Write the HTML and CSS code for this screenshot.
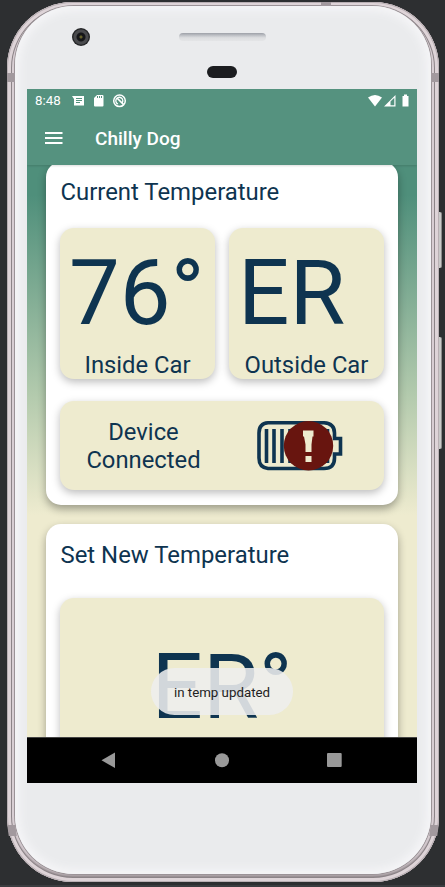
FILE: index.html
```html
<!DOCTYPE html>
<html lang="en">
<head>
<meta charset="utf-8">
<title>Chilly Dog</title>
<link rel="stylesheet" href="styles.css">
</head>
<body>
<div class="phone">
  <i class="side-button power"></i><i class="side-button volume"></i>
  <i class="antenna top-right"></i>
  <i class="antenna left-up"></i><i class="antenna right-up"></i>
  <i class="antenna left-low"></i><i class="antenna right-low"></i>
  <div class="face">
    <div class="bezel">
      <i class="camera"></i><i class="speaker"></i><i class="sensor"></i>
    </div>
    <div class="screen">
      <header class="app-bar">
        <div class="status">
          <span class="clock">8:48</span>
          <svg class="notices" width="56" height="16" viewBox="0 0 56 16">
            <path fill="#fff" d="M0 3H12V12.500H2V6z"/>
            <path stroke="#55927f" d="M4 5.500h6M4 7.500h6M4 9.500h4"/>
            <path fill="#fff" d="M25 2h5.500q1 0 1 1v9.500q0 1-1 1H23q-1 0-1-1V5z"/>
            <path stroke="#55927f" d="M25.500 3v2M27.500 3v2M29.500 3v2"/>
            <g fill="none" stroke="#fff"><circle cx="47.500" cy="7.800" r="5.800" stroke-width="1.500"/><path d="M46 11a3.500 3.500 0 1 1 4-1" stroke-width="1.300"/><path d="M45 5l6.500 6.500" stroke-width="1.700"/></g>
          </svg>
          <svg class="signals" width="44" height="16" viewBox="0 0 44 16">
            <path fill="#fff" d="M0 4.500Q7 -.5 14 4.500L7 13.500ZM27.500 2V13.500H16ZM34.500 3h1.500V1.500h3V3h1.500v10.500h-6z"/>
            <path fill="#55927f" d="M22.500 8.500L26.300 4.800V12.300H22.500Z"/>
          </svg>
        </div>
        <div class="toolbar">
          <svg width="18" height="12" viewBox="0 0 18 12"><path d="M0 1h17.500M0 6h17.500M0 11h17.500" stroke="#fff" stroke-width="2"/></svg>
          <h1>Chilly Dog</h1>
        </div>
      </header>
      <main class="content">
        <section class="card current">
          <h2>Current Temperature</h2>
          <div class="tiles">
            <div class="tile reading"><span class="value">76°</span><span class="label">Inside Car</span></div>
            <div class="tile reading"><span class="value">ER</span><span class="label">Outside Car</span></div>
          </div>
          <div class="tile device">
            <p>Device<br>Connected</p>
            <svg width="88" height="54" viewBox="0 0 88 54">
              <g fill="none" stroke="#0e3450" stroke-width="3.600">
                <path d="M12 4.800H68Q78.500 5.500 78.500 15V20.500H84.500V36H78.500V40Q78.500 50.500 68 50.500H12Q3 49.500 3 40V15Q3 5.500 12 4.800Z"/>
                <path d="M10.500 11v34M18 11v34M26 11v34M34 11v34M71.500 11v34"/>
              </g>
              <circle cx="52.500" cy="27.700" r="24.700" fill="#68150f"/>
              <path fill="#eeebcf" d="M47 12.500h10.500v6h-1l-1 8v7.500h-6v-7.500l-1.500-8h-1zM49.500 38h6v6h-6z"/>
            </svg>
          </div>
        </section>
        <section class="card target">
          <h2>Set New Temperature</h2>
          <div class="tile setpoint"><span class="value">ER°</span></div>
        </section>
        <div class="toast">in temp updated</div>
      </main>
      <nav class="nav">
        <svg width="390" height="46" viewBox="0 0 390 46"><g fill="#999"><path d="M74.500 22.300L88 14.500V30.100Z"/><circle cx="195" cy="22.300" r="7"/><rect x="300" y="15" width="14.700" height="14" rx="1"/></g></svg>
      </nav>
    </div>
  </div>
</div>
</body>
</html>
```
FILE: styles.css
```css
* { box-sizing: border-box; }
body {
  margin: 0;
  height: 887px;
  overflow: hidden;
  background: #2d2f31;
  border-bottom: 2px solid #3b3d40;
  padding: 2px 6px 0 7px;
  font-family: Roboto, sans-serif;
  color: #0e3450;
}
h1, h2, p { margin: 0; font-weight: 400; }
.phone {
  position: relative;
  height: 880px;
  padding: 4px 8px 8px;
  border-radius: 66px;
  background: #d8ced3;
  box-shadow: inset 0 0 0 1px #b9b0b4, inset 0 0 0 4px #ded4d8, inset 0 0 0 5px #8c8488, inset 0 -5px 3px 2px #91888c;
}
.face {
  height: 868px;
  padding: 0 12px;
  border-radius: 59px;
  background: #eaebed;
  box-shadow: 0 0 0 1px #9b9397, inset 0 0 9px 5px #f5f5f7;
}
.bezel { position: relative; height: 83px; }
.camera, .speaker, .sensor, .antenna, .side-button { position: absolute; }
.camera {
  left: 45px; top: 22px; width: 18px; height: 18px; border-radius: 50%;
  background: radial-gradient(circle, #65612a 0 1px, #151619 2px 4px, #4a4b4e 5px 7px, #242527 8px);
}
.speaker { left: 152px; top: 27px; width: 87px; height: 8px; border-radius: 4px; background: linear-gradient(#9da0a8, #c4c6cb 35%, #dddee0 60%, #e4e5e7); }
.sensor { left: 180px; top: 60px; width: 30px; height: 12px; border-radius: 6px; background: #1c1d20; }
.antenna { background: #a2999e; }
.top-right { left: 314px; top: 0; width: 10px; height: 4px; }
.left-up { left: 0; top: 71px; width: 8px; height: 9px; }
.right-up { right: 0; top: 71px; width: 8px; height: 9px; }
.left-low { left: 1px; top: 823px; width: 8px; height: 11px; transform: skewX(8deg); }
.right-low { right: 1px; top: 823px; width: 8px; height: 11px; transform: skewX(-8deg); }
.side-button { right: -3px; width: 3px; background: #c9c9c8; border-right: 1px solid #8c8c8b; border-radius: 0 2px 2px 0; }
.power { top: 210px; height: 56px; }
.volume { top: 335px; height: 112px; }
.screen { width: 390px; height: 694px; display: flex; flex-direction: column; overflow: hidden; }
.app-bar { position: relative; z-index: 2; height: 76px; flex: none; background: #55927f; color: #fff; box-shadow: 0 1px 2px #0002; }
.status { display: flex; align-items: center; height: 23px; padding: 0 5px 0 8px; }
.clock { font-size: 13.3px; width: 37px; }
.signals { margin-left: auto; }
.toolbar { display: flex; align-items: center; height: 53px; padding: 0 18px; gap: 32px; }
.toolbar svg { margin-top: -2px; }
.toolbar h1 { font-size: 19px; font-weight: 500; }
.content {
  position: relative;
  flex: none;
  height: 572px;
  padding: 0 19px;
  overflow: hidden;
  background: linear-gradient(#4f8f7b 30px, #b3caad 230px, #eeebcf 350px);
}
.card { background: #fff; border-radius: 15px; padding: 0 14px; box-shadow: 0 4px 8px #0005; }
.card h2 { font-size: 23.9px; line-height: 28px; margin-left: 0.5px; white-space: nowrap; }
.current { height: 343px; margin-top: -3px; padding-top: 16px; }
.tiles { display: flex; gap: 14px; margin-top: 22px; }
.tile { background: #eeebcf; border-radius: 14px; box-shadow: 0 3px 8px #0004; }
.reading { flex: 1; height: 151px; padding-top: 12px; display: flex; flex-direction: column; }
.value { font-size: 90.5px; line-height: 107px; padding-left: 9px; white-space: nowrap; }
.label { font-size: 23.8px; line-height: 28px; margin-top: 4px; text-align: center; }
.device { height: 89px; margin-top: 22px; padding-top: 17px; display: flex; }
.device p { width: 167px; font-size: 23.8px; line-height: 28px; text-align: center; }
.device svg { margin-left: 29px; }
.target { height: 380px; margin-top: 19px; padding-top: 17px; }
.setpoint { height: 320px; margin-top: 29px; padding-top: 36px; text-align: center; }
.setpoint .value { padding: 0; }
.toast {
  position: absolute; left: 124px; top: 503px; width: 142px; height: 47px; border-radius: 24px;
  background: #eeeeeee0; color: #222; font-size: 13.3px; line-height: 49px; text-align: center;
}
.nav { flex: none; height: 46px; background: #000; border-top: 1px solid #444; }
.nav svg { display: block; }
```
